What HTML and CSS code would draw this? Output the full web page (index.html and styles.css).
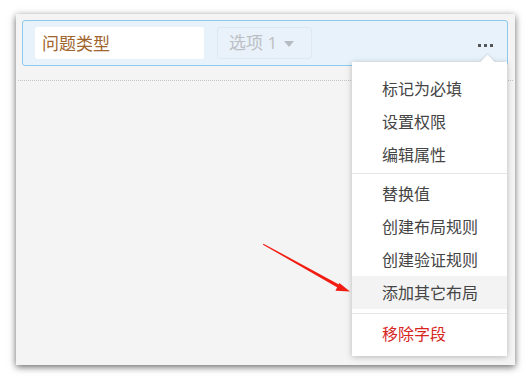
FILE: index.html
```html
<!DOCTYPE html>
<html lang="zh">
<head>
<meta charset="utf-8">
<link rel="stylesheet" href="styles.css">
</head>
<body>
<div class="panel">
  <div class="bar">
    <div class="input">问题类型</div>
    <div class="select">选项 1 <span class="caret"></span></div>
    <div class="more"><span></span><span></span><span></span></div>
  </div>
  <div class="dotted"></div>
  <div class="menu">
    <div class="item">标记为必填</div>
    <div class="item">设置权限</div>
    <div class="item">编辑属性</div>
    <div class="divider"></div>
    <div class="item">替换值</div>
    <div class="item">创建布局规则</div>
    <div class="item">创建验证规则</div>
    <div class="item hover">添加其它布局</div>
    <div class="divider divider-b"></div>
    <div class="item danger">移除字段</div>
  </div>
  <svg class="arrow" width="499" height="351" viewBox="0 0 499 351">
    <polygon points="247,230.7 247.5,229.7 323.8,270.9 322.3,273.9" fill="#f21d12"/>
    <polygon points="334,277.5 319.4,276.7 323.4,269.1" fill="#f21d12"/>
  </svg>
</div>
</body>
</html>
```
FILE: styles.css
```css
html, body {
  margin: 0;
  padding: 0;
  background: #fff;
}
body {
  padding: 14px 16px;
  font-family: "Noto Sans CJK SC", "Noto Sans", sans-serif;
}
.panel {
  position: relative;
  width: 499px;
  height: 351px;
  box-sizing: border-box;
  background: #f4f4f4;
  box-shadow: 0 2px 7px rgba(0, 0, 0, 0.6);
  padding: 6px 7px 0 6px;
}
.bar {
  height: 46px;
  box-sizing: border-box;
  border: 1px solid #8ec9ec;
  border-radius: 3px;
  background: #e8f2fa;
  display: flex;
  align-items: center;
  padding: 0 0 0 12px;
}
.input {
  width: 169px;
  height: 32px;
  background: #fff;
  border-radius: 2px;
  box-sizing: border-box;
  padding-left: 7px;
  font-size: 17px;
  line-height: 32px;
  color: #a0652d;
}
.select {
  margin-left: 13px;
  width: 95px;
  height: 32px;
  box-sizing: border-box;
  border: 1px solid #dce8f2;
  border-radius: 3px;
  background: #e9f2fa;
  padding-left: 11px;
  font-family: "Open Sans", "Noto Sans CJK SC", sans-serif;
  font-size: 17px;
  line-height: 30px;
  color: #bcc0c4;
  display: flex;
  align-items: center;
}
.caret {
  margin-left: 7px;
  width: 0;
  height: 0;
  border-left: 5px solid transparent;
  border-right: 5px solid transparent;
  border-top: 6px solid #b7bcc2;
  margin-top: 1px;
}
.more {
  margin-left: auto;
  margin-right: 14px;
  display: flex;
  gap: 3px;
  margin-top: 4px;
}
.more span {
  width: 3px;
  height: 3px;
  background: #555;
}
.dotted {
  margin: 14px -5px 0 -4px;
  border-top: 1px dotted #c4c4c4;
}
.menu {
  position: absolute;
  left: 336px;
  top: 48px;
  width: 155px;
  background: #fff;
  box-shadow: 0 1px 6px rgba(0, 0, 0, 0.25);
  padding: 10px 0 6px;
  z-index: 2;
}
.menu::before {
  content: "";
  position: absolute;
  top: -5px;
  left: 130px;
  width: 11px;
  height: 11px;
  background: #fff;
  transform: rotate(45deg);
  box-shadow: -1px -1px 2px rgba(0, 0, 0, 0.08);
}
.item {
  position: relative;
  height: 33px;
  line-height: 33px;
  padding-left: 30px;
  font-size: 16px;
  color: #454545;
}
.item.hover {
  background: #f3f3f3;
}
.item.danger {
  color: #d7261e;
}
.divider {
  height: 1px;
  background: #e6e6e6;
  margin: 2px 0 3px;
}
.divider-b {
  margin: 4px 0 3px;
}
.arrow {
  position: absolute;
  left: 0;
  top: 0;
  z-index: 3;
  pointer-events: none;
}
```
